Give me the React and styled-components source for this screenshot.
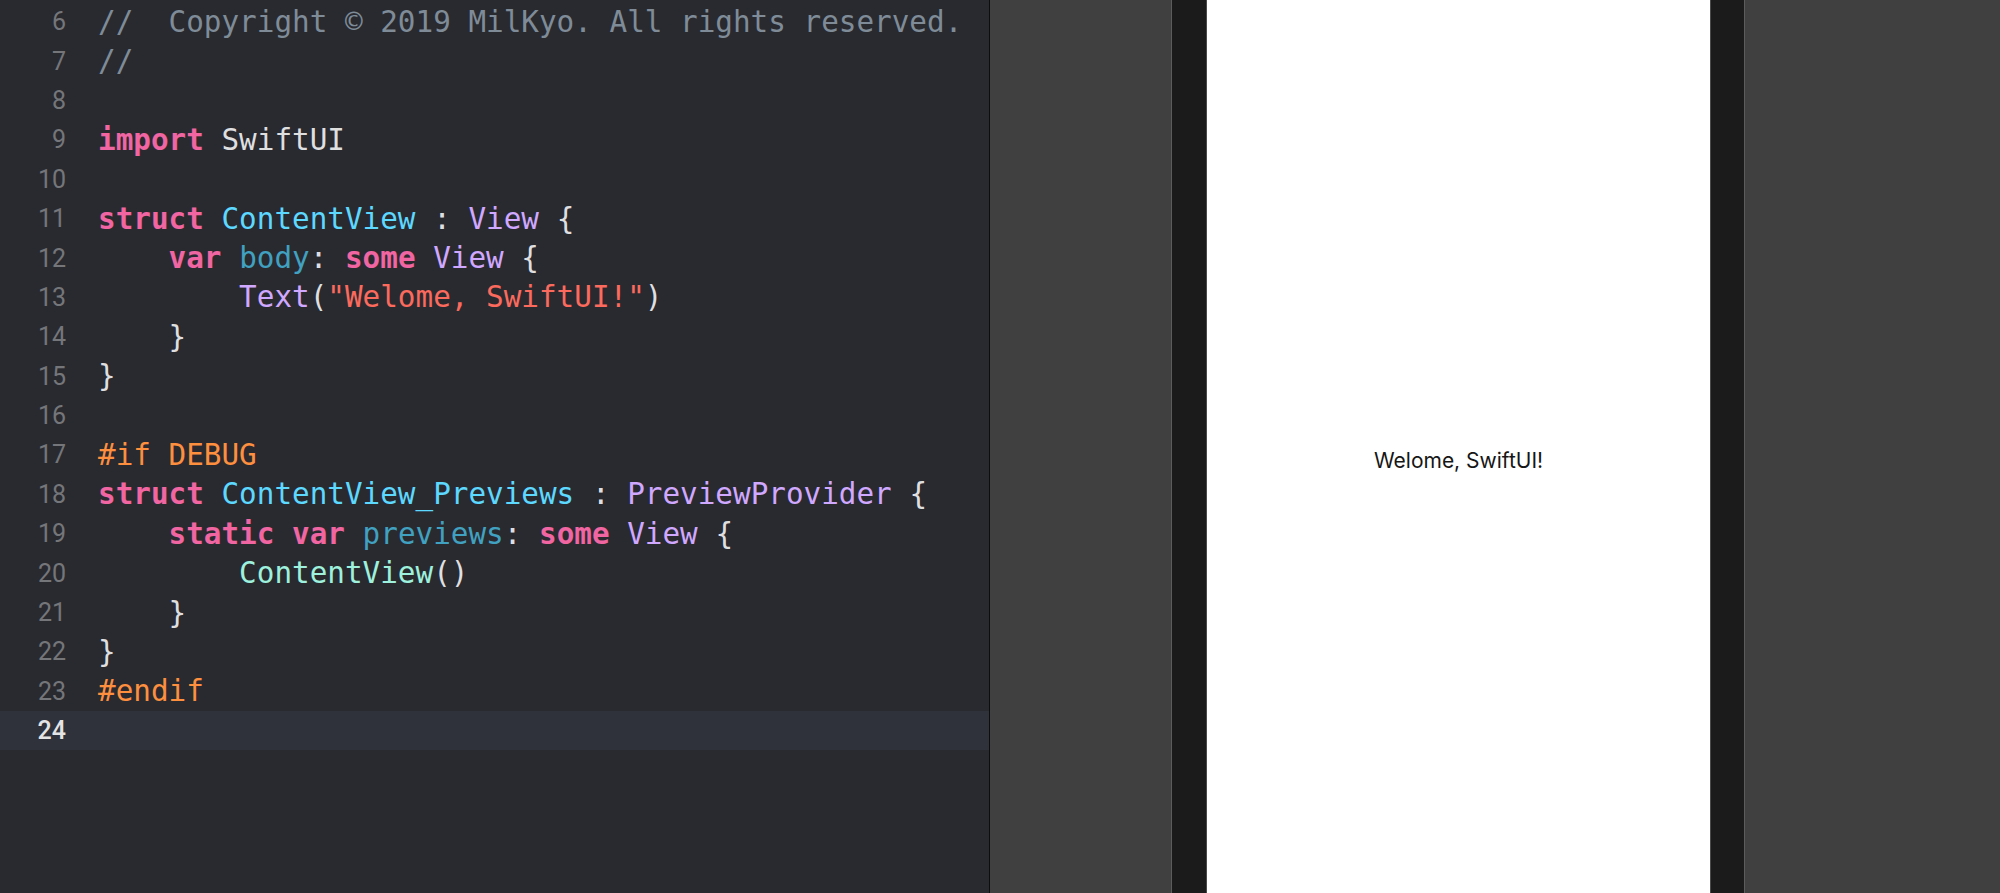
import React from 'react'
import styled, { createGlobalStyle } from 'styled-components'

const GlobalStyle = createGlobalStyle`
    html, body {
        margin: 0;
        padding: 0;
        background: #404040;
        overflow: hidden;
    }
`

const COLORS = {
    plain: '#dfdfe0',
    comment: '#7f8c98',
    keyword: '#f065a2',
    decl: '#5dd8ff',
    type: '#d0a8ff',
    other: '#41a1c0',
    string: '#fc6a5d',
    pre: '#fd8f3f',
    project: '#9ef1dd',
}

const Window = styled.div`
    display: flex;
    width: 2000px;
    height: 893px;
    overflow: hidden;
`

const Editor = styled.div`
    width: 989px;
    flex-shrink: 0;
    background: #292a30;
    padding-top: 2px;
    box-sizing: border-box;
`

const Divider = styled.div`
    width: 1px;
    flex-shrink: 0;
    background: #0d0d0d;
`

const Line = styled.div`
    display: flex;
    align-items: center;
    height: 39.4px;
    background: ${(p) => (p.$current ? '#2f323a' : 'transparent')};
`

const LineNumber = styled.span`
    width: 66px;
    flex-shrink: 0;
    text-align: right;
    font-family: Roboto, 'Liberation Sans', sans-serif;
    font-size: 25px;
    color: ${(p) => (p.$current ? '#e4e4e5' : '#75767a')};
    font-weight: ${(p) => (p.$current ? 500 : 400)};
`

const Code = styled.span`
    margin-left: 32px;
    white-space: pre;
    font-family: 'DejaVu Sans Mono', 'Liberation Mono', monospace;
    font-size: 29.3px;
    color: ${COLORS.plain};
`

const Token = styled.span`
    color: ${(p) => COLORS[p.$kind]};
    font-weight: ${(p) => (p.$kind === 'keyword' ? 'bold' : 'normal')};
`

const Canvas = styled.div`
    flex: 1;
    display: flex;
    padding-left: 181px;
    background: #404040;
`

const Device = styled.div`
    display: flex;
    border-left: 1px solid #5c5c5c;
    border-right: 1px solid #5c5c5c;
    background: #1b1b1b;
    padding: 0 33px 0 34px;
`

const Screen = styled.div`
    width: 505px;
    display: flex;
    align-items: center;
    justify-content: center;
    padding-top: 27px;
    box-sizing: border-box;
    background: #ffffff;
    border-left: 1px solid #4a4a4a;
    border-right: 1px solid #4a4a4a;
`

const PreviewText = styled.span`
    font-family: Inter, 'Liberation Sans', sans-serif;
    font-size: 21px;
    color: #161616;
`

const t = (kind, text) => ({ kind, text })

const lines = [
    { n: 6, tokens: [t('comment', '//  Copyright © 2019 MilKyo. All rights reserved.')] },
    { n: 7, tokens: [t('comment', '//')] },
    { n: 8, tokens: [] },
    { n: 9, tokens: [t('keyword', 'import'), t('plain', ' SwiftUI')] },
    { n: 10, tokens: [] },
    {
        n: 11,
        tokens: [
            t('keyword', 'struct'),
            t('plain', ' '),
            t('decl', 'ContentView'),
            t('plain', ' : '),
            t('type', 'View'),
            t('plain', ' {'),
        ],
    },
    {
        n: 12,
        tokens: [
            t('plain', '    '),
            t('keyword', 'var'),
            t('plain', ' '),
            t('other', 'body'),
            t('plain', ': '),
            t('keyword', 'some'),
            t('plain', ' '),
            t('type', 'View'),
            t('plain', ' {'),
        ],
    },
    {
        n: 13,
        tokens: [
            t('plain', '        '),
            t('type', 'Text'),
            t('plain', '('),
            t('string', '"Welome, SwiftUI!"'),
            t('plain', ')'),
        ],
    },
    { n: 14, tokens: [t('plain', '    }')] },
    { n: 15, tokens: [t('plain', '}')] },
    { n: 16, tokens: [] },
    { n: 17, tokens: [t('pre', '#if DEBUG')] },
    {
        n: 18,
        tokens: [
            t('keyword', 'struct'),
            t('plain', ' '),
            t('decl', 'ContentView_Previews'),
            t('plain', ' : '),
            t('type', 'PreviewProvider'),
            t('plain', ' {'),
        ],
    },
    {
        n: 19,
        tokens: [
            t('plain', '    '),
            t('keyword', 'static'),
            t('plain', ' '),
            t('keyword', 'var'),
            t('plain', ' '),
            t('other', 'previews'),
            t('plain', ': '),
            t('keyword', 'some'),
            t('plain', ' '),
            t('type', 'View'),
            t('plain', ' {'),
        ],
    },
    { n: 20, tokens: [t('plain', '        '), t('project', 'ContentView'), t('plain', '()')] },
    { n: 21, tokens: [t('plain', '    }')] },
    { n: 22, tokens: [t('plain', '}')] },
    { n: 23, tokens: [t('pre', '#endif')] },
    { n: 24, tokens: [], current: true },
]

const App = () => {
    return (
        <>
            <GlobalStyle />
            <Window>
                <Editor>
                    {lines.map((line) => (
                        <Line key={line.n} $current={line.current}>
                            <LineNumber $current={line.current}>{line.n}</LineNumber>
                            <Code>
                                {line.tokens.map((tok, i) => (
                                    <Token key={i} $kind={tok.kind}>
                                        {tok.text}
                                    </Token>
                                ))}
                            </Code>
                        </Line>
                    ))}
                </Editor>
                <Divider />
                <Canvas>
                    <Device>
                        <Screen>
                            <PreviewText>Welome, SwiftUI!</PreviewText>
                        </Screen>
                    </Device>
                </Canvas>
            </Window>
        </>
    )
}

export default App
